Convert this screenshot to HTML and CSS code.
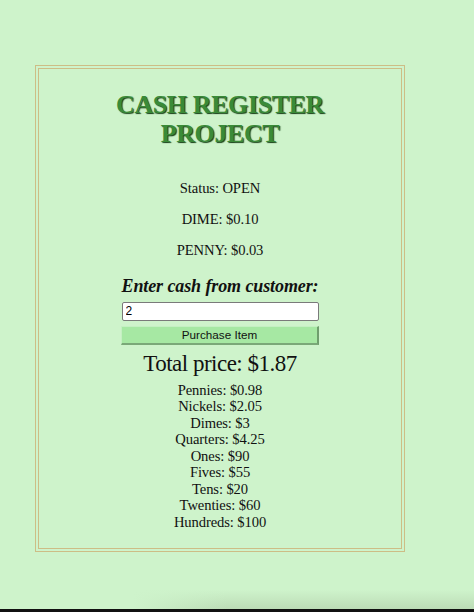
FILE: index.html
```html
<!DOCTYPE html>
<html lang="en">
<head>
<meta charset="utf-8">
<title>Cash Register Project</title>
<link rel="stylesheet" href="styles.css">
</head>
<body>
<main class="register">
  <h1 class="title">CASH REGISTER<br>PROJECT</h1>
  <div class="drawer">
    <p class="drawer-line">Status: OPEN</p>
    <p class="drawer-line">DIME: $0.10</p>
    <p class="drawer-line">PENNY: $0.03</p>
  </div>
  <label class="cash-label" for="cash">Enter cash from customer:</label>
  <input class="cash-input" id="cash" type="text" value="2">
  <button class="purchase-btn" type="button">Purchase Item</button>
  <div class="total">Total price: $1.87</div>
  <ul class="cid">
    <li>Pennies: $0.98</li>
    <li>Nickels: $2.05</li>
    <li>Dimes: $3</li>
    <li>Quarters: $4.25</li>
    <li>Ones: $90</li>
    <li>Fives: $55</li>
    <li>Tens: $20</li>
    <li>Twenties: $60</li>
    <li>Hundreds: $100</li>
  </ul>
</main>
<div class="window-shadow"></div>
<div class="window-edge"></div>
</body>
</html>
```
FILE: styles.css
```css
html, body {
  margin: 0;
  padding: 0;
}
body {
  background: #cef3cb;
  font-family: "Liberation Serif", "Times New Roman", serif;
  color: #111;
  padding: 65px 0 0 35px;
  height: 612px;
  box-sizing: border-box;
  display: flex;
  flex-direction: column;
  overflow: hidden;
}
.register {
  width: 370px;
  box-sizing: border-box;
  border: 4px double #cdbd86;
  padding: 21px 0 18px;
  display: flex;
  flex-direction: column;
  align-items: center;
  text-align: center;
}
.title {
  margin: 0;
  font-size: 26px;
  letter-spacing: -0.4px;
  line-height: 29px;
  font-weight: bold;
  color: #3a8a38;
  text-shadow: 1px 1px 1px #163f16;
}
.drawer {
  margin-top: 24.6px;
  display: flex;
  flex-direction: column;
}
.drawer-line {
  margin: 0;
  font-size: 14.6px;
  letter-spacing: -0.1px;
  line-height: 31px;
}
.cash-label {
  margin-top: 9.4px;
  font-size: 18px;
  letter-spacing: -0.1px;
  line-height: 22px;
  font-weight: bold;
  font-style: italic;
}
.cash-input {
  margin-top: 5px;
  width: 197px;
  height: 19px;
  box-sizing: border-box;
  border: 1px solid #7a7a7a;
  border-radius: 2px;
  background: #fff;
  padding: 0 3px;
  font-family: "Liberation Sans", Arial, sans-serif;
  font-size: 12px;
  color: #000;
}
.purchase-btn {
  margin-top: 5px;
  width: 198px;
  height: 19px;
  box-sizing: border-box;
  border: 0;
  border-right: 2px solid #6f9e6d;
  border-bottom: 2px solid #7aa878;
  border-top: 1px solid #c4f0c2;
  border-left: 1px solid #c4f0c2;
  background: #a6e8a3;
  padding: 0;
  font-family: "Liberation Sans", Arial, sans-serif;
  font-size: 11.7px;
  color: #111;
}
.total {
  margin-top: 5.7px;
  font-size: 23px;
  letter-spacing: -0.5px;
  line-height: 26px;
}
.cid {
  list-style: none;
  margin: 5.2px 0 0;
  padding: 0;
  font-size: 14.6px;
  letter-spacing: -0.1px;
  line-height: 16.5px;
}
.window-shadow {
  margin-top: auto;
  margin-left: -35px;
  height: 19px;
  background:
    linear-gradient(to right, #cef3cb 0, #cef3cb 28%, rgba(206,243,203,0) 48%),
    linear-gradient(to bottom, rgba(188,220,184,0), #bcdcb6);
}
.window-edge {
  margin-left: -35px;
  height: 3px;
  background: #111;
}
```
